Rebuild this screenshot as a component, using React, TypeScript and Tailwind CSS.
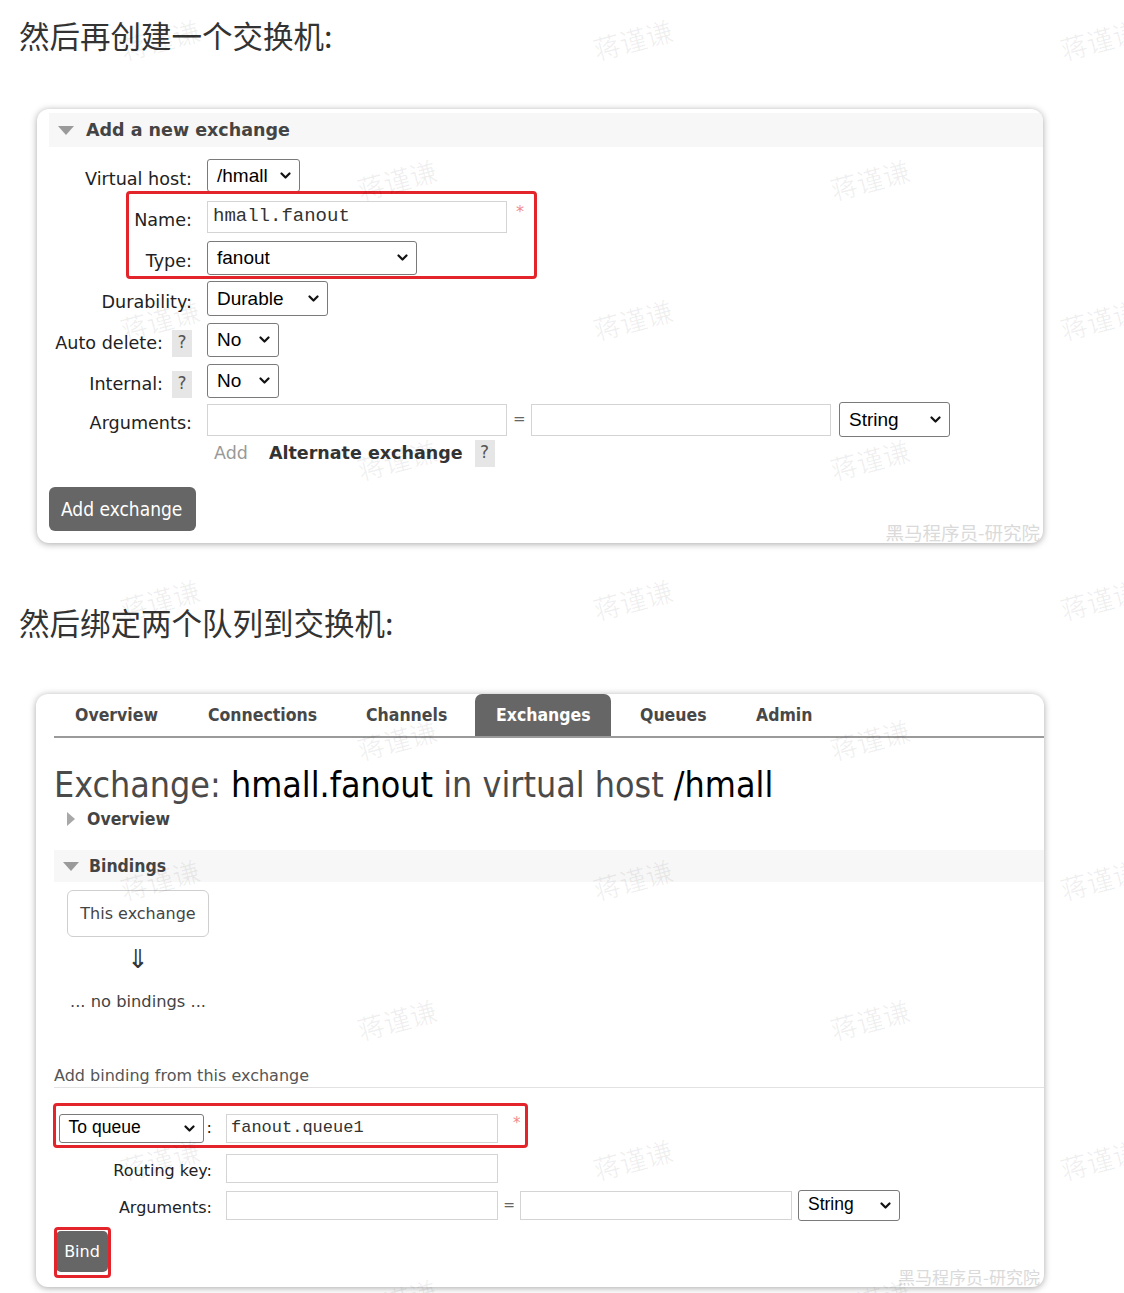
import React from 'react';

const marks: [number, number][] = [
  [160, 40], [633, 40], [1100, 40],
  [397, 180], [870, 180],
  [160, 320], [633, 320], [1100, 320],
  [397, 460], [870, 460],
  [160, 600], [633, 600], [1100, 600],
  [397, 740], [870, 740],
  [160, 880], [633, 880], [1100, 880],
  [397, 1020], [870, 1020],
  [160, 1160], [633, 1160], [1100, 1160],
  [397, 1300], [870, 1300],
];

function Chevron() {
  return (
    <svg width="11" height="7" viewBox="0 0 11 7" className="shrink-0">
      <path d="M1.5 1.5 L5.5 5.5 L9.5 1.5" fill="none" stroke="#111" strokeWidth="2.2" strokeLinecap="round" strokeLinejoin="round" />
    </svg>
  );
}

function Select({ value, className }: { value: string; className: string }) {
  return (
    <div
      className={`flex items-center justify-between rounded-[3px] border border-[#7a7a7a] bg-white pl-[9px] pr-[8px] font-['Liberation_Sans',Arial,sans-serif] text-black ${className}`}
    >
      <span className="leading-none">{value}</span>
      <Chevron />
    </div>
  );
}

function Help() {
  return (
    <span className="flex h-[27px] w-[20px] items-center justify-center bg-[#e6e6e6] text-[17px] text-[#555]">?</span>
  );
}

function TriDown() {
  return (
    <svg width="16" height="9" viewBox="0 0 16 9">
      <polygon points="0,0 16,0 8,9" fill="#9a9a9a" />
    </svg>
  );
}

function TriRight() {
  return (
    <svg width="8" height="14" viewBox="0 0 8 14">
      <polygon points="0,0 8,7 0,14" fill="#a8a8a8" />
    </svg>
  );
}

function Row({ label, help, children }: { label: string; help?: boolean; children: React.ReactNode }) {
  return (
    <div className="flex h-[41px] items-center">
      <div className="flex w-[143px] items-center justify-end gap-[9px] pt-[7px] text-[#222]">
        <span className="whitespace-nowrap">{label}</span>
        {help && <Help />}
      </div>
      <div className="ml-[15px] flex items-center">{children}</div>
    </div>
  );
}

const tabs = [
  { name: 'Overview', w: 'w-[133px]' },
  { name: 'Connections', w: 'w-[158px]' },
  { name: 'Channels', w: 'w-[130px]' },
  { name: 'Exchanges', w: 'w-[136px]', active: true },
  { name: 'Queues', w: 'w-[116px] ml-[8px]' },
  { name: 'Admin', w: 'w-[100px]' },
];

export default function App() {
  return (
    <div className="relative h-[1293px] w-full overflow-hidden bg-white font-['DejaVu_Sans',sans-serif]">
      <h1 className="pl-[19px] pt-[15px] font-['Noto_Sans_CJK_SC',sans-serif] text-[30.5px] font-normal leading-[40px] text-[#333]">
        然后再创建一个交换机:
      </h1>

      {/* Add a new exchange */}
      <div className="relative ml-[37px] mt-[54px] w-[1006px] overflow-hidden rounded-[12px] bg-white pb-[12px] pt-[4px] shadow-[0_1px_7px_rgba(0,0,0,0.35)]">
        <div className="ml-[12px] flex h-[34px] items-center bg-[#f7f7f7] pl-[9px]">
          <TriDown />
          <span className="ml-[12px] text-[17.5px] font-bold text-[#444]">Add a new exchange</span>
        </div>

        <div className="pl-[12px] pt-[8px] text-[17.6px]">
          <Row label="Virtual host:">
            <Select value="/hmall" className="h-[33px] w-[93px] text-[19px]" />
          </Row>
          <div className="relative">
            <div className="pointer-events-none absolute -top-[5px] left-[77px] h-[88px] w-[411px] rounded-[4px] border-[3px] border-[#e3242b]" />
            <Row label="Name:">
              <div className="flex h-[32px] w-[300px] items-center border border-[#d4d4d4] bg-white pl-[5px] font-['Liberation_Mono',monospace] text-[19px] text-[#333]">
                hmall.fanout
              </div>
              <span className="ml-[9px] -mt-[10px] text-[16px] text-[#f08a8a]">*</span>
            </Row>
            <Row label="Type:">
              <Select value="fanout" className="h-[34px] w-[210px] text-[19px]" />
            </Row>
          </div>
          <Row label="Durability:">
            <Select value="Durable" className="h-[35px] w-[121px] text-[19px]" />
          </Row>
          <Row label="Auto delete:" help>
            <Select value="No" className="h-[34px] w-[72px] text-[19px]" />
          </Row>
          <Row label="Internal:" help>
            <Select value="No" className="h-[34px] w-[72px] text-[19px]" />
          </Row>
          <div className="-mt-[2px]">
            <Row label="Arguments:">
              <div className="h-[32px] w-[300px] border border-[#d4d4d4] bg-white" />
              <span className="mx-[6px] w-[12px] text-center text-[15px] text-[#666]">=</span>
              <div className="h-[32px] w-[300px] border border-[#d4d4d4] bg-white" />
              <Select value="String" className="ml-[8px] h-[35px] w-[111px] text-[19px]" />
            </Row>
          </div>
          <div className="flex h-[26px] items-center pl-[165px]">
            <span className="text-[17.5px] text-[#999]">Add</span>
            <span className="ml-[21px] text-[17.5px] font-bold text-[#333]">Alternate exchange</span>
            <span className="ml-[12px]">
              <Help />
            </span>
          </div>
        </div>

        <button className="ml-[12px] mt-[21px] flex h-[44px] w-[147px] items-center rounded-[6px] bg-[#666] pl-[12px] font-['DejaVu_Sans_Condensed','DejaVu_Sans',sans-serif] text-[19px] text-white">
          Add exchange
        </button>

        <span className="absolute bottom-[0px] right-[3px] whitespace-nowrap font-['Noto_Sans_CJK_SC',serif] text-[18.5px] leading-[22px] text-[#dadada]">
          黑马程序员-研究院
        </span>
      </div>

      <h1 className="mt-[59px] pl-[19px] font-['Noto_Sans_CJK_SC',sans-serif] text-[30.5px] font-normal leading-[40px] text-[#333]">
        然后绑定两个队列到交换机:
      </h1>

      {/* Exchange page */}
      <div className="relative ml-[36px] mt-[52px] w-[1008px] overflow-hidden rounded-[12px] bg-white pb-[15px] pl-[18px] shadow-[0_1px_7px_rgba(0,0,0,0.35)]">
        <nav className="flex h-[44px] border-b-2 border-[#9a9a9a] font-['DejaVu_Sans_Condensed','DejaVu_Sans',sans-serif] text-[17.5px] font-bold">
          {tabs.map((t) => (
            <div
              key={t.name}
              className={`flex h-full items-center pl-[21px] ${t.w} ${t.active ? 'rounded-t-[7px] bg-[#666] text-white' : 'text-[#484848]'}`}
            >
              {t.name}
            </div>
          ))}
        </nav>

        <div className="mt-[25px] whitespace-nowrap font-['DejaVu_Sans_Condensed','DejaVu_Sans',sans-serif] text-[35.5px] leading-[44px] text-[#4a4a4a]">
          Exchange: <span className="text-black">hmall.fanout</span> in virtual host <span className="text-black">/hmall</span>
        </div>

        <div className="flex h-[24px] items-center pl-[13px]">
          <TriRight />
          <span className="ml-[12px] font-['DejaVu_Sans_Condensed','DejaVu_Sans',sans-serif] text-[17.5px] font-bold text-[#444]">Overview</span>
        </div>

        <div className="mt-[19px] flex h-[32px] items-center bg-[#f7f7f7] pl-[9px]">
          <TriDown />
          <span className="ml-[10px] font-['DejaVu_Sans_Condensed','DejaVu_Sans',sans-serif] text-[17.5px] font-bold text-[#444]">Bindings</span>
        </div>

        <div className="ml-[13px] mt-[8px] flex h-[47px] w-[142px] items-center justify-center rounded-[6px] border border-[#cfcfcf] text-[16px] text-[#444]">
          This exchange
        </div>
        <div className="ml-[13px] mt-[8px] flex h-[24px] w-[142px] items-center justify-center font-['Noto_Sans_CJK_SC',sans-serif] text-[26px] leading-[24px] text-[#333]">⇓</div>
        <div className="ml-[16px] mt-[21px] text-[16.3px] leading-[24px] text-[#444]">... no bindings ...</div>

        <div className="mt-[50px] border-b border-[#e2e2e2] text-[16px] leading-[23px] text-[#555]">Add binding from this exchange</div>

        <div className="mt-[20px] text-[16px] text-[#222]">
          <div className="relative flex h-[40px] items-center">
            <div className="pointer-events-none absolute -left-[1px] top-[-5px] h-[45px] w-[475px] rounded-[4px] border-[3px] border-[#e3242b]" />
            <div className="flex w-[158px] items-center justify-end gap-[3px]">
              <Select value="To queue" className="h-[29px] w-[145px] text-[17.5px]" />
              <span>:</span>
            </div>
            <div className="ml-[14px] flex h-[29px] w-[272px] items-center border border-[#d4d4d4] bg-white pl-[4px] font-['Liberation_Mono',monospace] text-[17px] text-[#333]">
              fanout.queue1
            </div>
            <span className="ml-[15px] -mt-[10px] text-[15px] text-[#f08a8a]">*</span>
          </div>
          <div className="flex h-[40px] items-center">
            <div className="w-[158px] pt-[6px] text-right">Routing key:</div>
            <div className="ml-[14px] h-[29px] w-[272px] border border-[#d4d4d4] bg-white" />
          </div>
          <div className="flex h-[34px] items-center">
            <div className="w-[158px] pt-[6px] text-right">Arguments:</div>
            <div className="ml-[14px] h-[29px] w-[272px] border border-[#d4d4d4] bg-white" />
            <span className="mx-[5px] w-[12px] text-center text-[14px] text-[#666]">=</span>
            <div className="h-[29px] w-[272px] border border-[#d4d4d4] bg-white" />
            <Select value="String" className="ml-[6px] h-[31px] w-[102px] text-[17.5px]" />
          </div>
        </div>

        <div className="relative ml-[2px] mt-[9px] w-[52px]">
          <div className="pointer-events-none absolute -left-[2px] -top-[4px] h-[51px] w-[57px] rounded-[4px] border-[3px] border-[#e3242b]" />
          <button className="flex h-[41px] w-[52px] items-center justify-center rounded-[5px] bg-[#666] text-[16px] text-white">Bind</button>
        </div>

        <span className="absolute bottom-[0px] right-[4px] whitespace-nowrap font-['Noto_Sans_CJK_SC',serif] text-[17px] leading-[20px] text-[#dadada]">
          黑马程序员-研究院
        </span>
      </div>

      {/* watermark */}
      <div className="pointer-events-none absolute inset-0">
        {marks.map(([x, y], i) => (
          <span
            key={i}
            style={{ left: x, top: y }}
            className="absolute -translate-x-1/2 -translate-y-1/2 -rotate-[15deg] whitespace-nowrap font-['Noto_Sans_CJK_SC',sans-serif] text-[27px] text-[rgba(0,0,0,0.06)]"
          >
            蒋谨谦
          </span>
        ))}
      </div>
    </div>
  );
}
